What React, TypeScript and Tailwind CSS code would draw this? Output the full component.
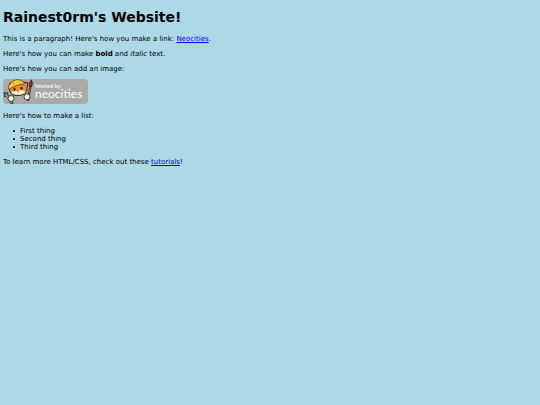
const things = ['First thing', 'Second thing', 'Third thing'];

function NeocitiesBadge() {
  return (
    <svg viewBox="0 0 85 25" role="img" aria-label="Hosted by Neocities" className="block h-[25px] w-[85px]">
      <rect x="0" y="0" width="85" height="25" rx="4" fill="#a9a9a9" />
      {/* wrench */}
      <path d="M2 14.5 L4.5 17 L9 24" fill="none" stroke="#3b444e" strokeWidth="3" strokeLinecap="round" />
      <path d="M0.8 17 L4.2 17 L4.4 13.2" fill="none" stroke="#3b444e" strokeWidth="1.8" />
      <path d="M2.5 15.5 L4.5 17.5 L8.5 23.5" fill="none" stroke="#9fb2c1" strokeWidth="1.2" strokeLinecap="round" />
      {/* cat */}
      <path d="M6 8 L7 4 L20 3 L25 4 L24 9 Q24.5 14.5 19 16 Q13 17.5 9 15.5 Q6 13 6 8Z" fill="#e98b33" stroke="#33241b" strokeWidth="1" />
      <path d="M8 13.2 Q11 11 14.8 12 Q18.5 10.5 22.5 12.5 Q21 15.5 16 15.7 Q10 15.8 8 13.2Z" fill="#fff0da" />
      <ellipse cx="11.5" cy="10.5" rx="1.1" ry="1.4" fill="#33231b" />
      <ellipse cx="18.5" cy="9.5" rx="1.1" ry="1.4" fill="#33231b" />
      <path d="M14 12 L16 12 L15 13.2Z" fill="#6d3525" />
      {/* hard hat */}
      <path d="M7 5 Q9 0.8 14 0.6 Q20 0.3 21.5 5 Q14 5 6.5 10 Q3.8 9 7 5Z" fill="#f4c842" stroke="#604414" strokeWidth="0.8" />
      <path d="M11 1.8 Q10 4 10.5 6 M16 1 Q17.5 3 17.5 4.8" fill="none" stroke="#ca922c" strokeWidth="0.7" />
      {/* brush */}
      <path d="M27.5 7 L25 21" stroke="#2b211f" strokeWidth="2.2" strokeLinecap="round" />
      <path d="M27.3 8 L26 15" stroke="#b58a5a" strokeWidth="0.8" />
      <path d="M28.3 0.8 Q30.3 4 28.6 7.5 L26.3 7 Q26 3 28.3 0.8Z" fill="#a02c2c" stroke="#3a1a1a" strokeWidth="0.8" />
      {/* paws */}
      <circle cx="8" cy="19.5" r="3" fill="#fff4e0" stroke="#3c2e24" strokeWidth="0.9" />
      <circle cx="24" cy="17.8" r="3" fill="#fff4e0" stroke="#3c2e24" strokeWidth="0.9" />
      <text fill="#fff" className="font-['Lato','Open_Sans',sans-serif]">
        <tspan x="32" y="9" fontSize="6">hosted by</tspan>
        <tspan x="32" y="19" fontSize="12">neocities</tspan>
      </text>
    </svg>
  );
}

export default function App() {
  return (
    <div className="min-h-screen bg-[#add8e6] px-[3px] pt-[9px] pb-2 font-['DejaVu_Sans',Verdana,sans-serif] text-[7px] leading-[8px] text-black">
      <h1 className="mb-[9px] text-[14px] leading-[17px] font-bold">Rainest0rm's Website!</h1>

      <p className="mb-[7px]">
        This is a paragraph! Here's how you make a link:{' '}
        <a href="#neocities" className="text-[#0000ee] underline">Neocities</a>.
      </p>
      <p className="mb-[7px]">
        Here's how you can make <strong>bold</strong> and <em>italic</em> text.
      </p>
      <p className="mb-[6px]">Here's how you can add an image:</p>

      <div className="mb-2">
        <NeocitiesBadge />
      </div>

      <p className="mb-[7px]">Here's how to make a list:</p>
      <ul className="mb-[7px] pl-[10px]">
        {things.map((thing) => (
          <li
            key={thing}
            className="flex items-center gap-[5px] before:size-[2px] before:rounded-full before:bg-black before:content-['']"
          >
            {thing}
          </li>
        ))}
      </ul>

      <p>
        To learn more HTML/CSS, check out these{' '}
        <a href="#tutorials" className="text-[#0000ee] underline">tutorials</a>!
      </p>
    </div>
  );
}
